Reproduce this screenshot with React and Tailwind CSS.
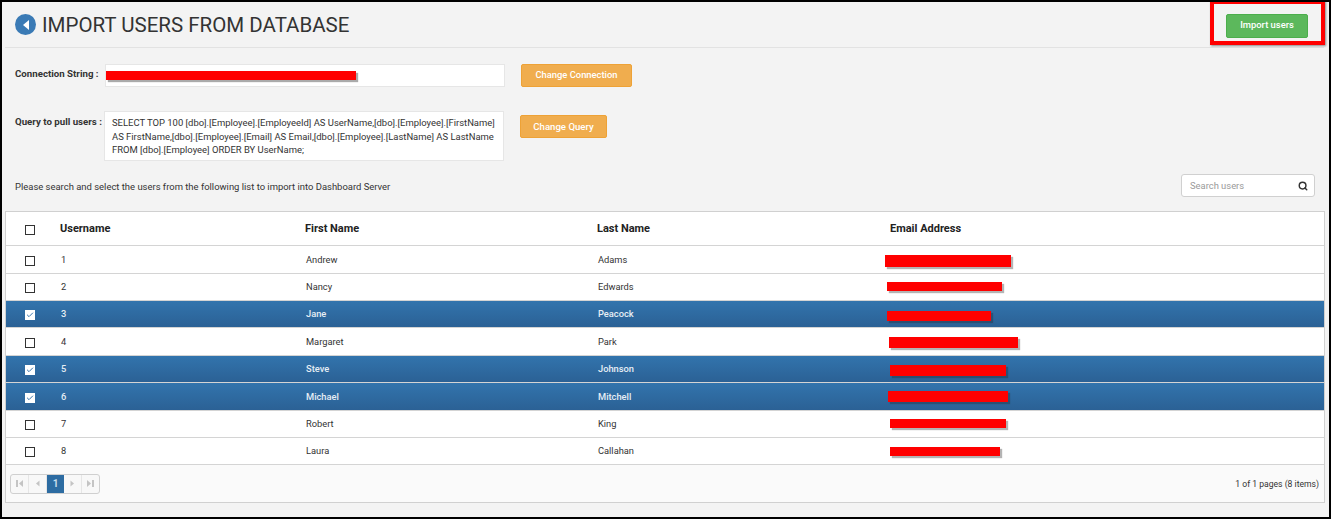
import { Check, Search } from "lucide-react";

const users = [
  { id: 1, first: "Andrew", last: "Adams", h: "h-[28px]", bar: "left-[-5px] top-[9px] w-[126px] h-[12px]" },
  { id: 2, first: "Nancy", last: "Edwards", h: "h-[27px]", bar: "left-[-3px] top-[8px] w-[115px] h-[9px]" },
  { id: 3, first: "Jane", last: "Peacock", h: "h-[27px]", selected: true, bar: "left-[-3px] top-[10px] w-[104px] h-[10px]" },
  { id: 4, first: "Margaret", last: "Park", h: "h-[28px]", bar: "left-[-1px] top-[9px] w-[129px] h-[11px]" },
  { id: 5, first: "Steve", last: "Johnson", h: "h-[27px]", selected: true, bar: "left-[0px] top-[9px] w-[116px] h-[11px]" },
  { id: 6, first: "Michael", last: "Mitchell", h: "h-[28px]", selected: true, bar: "left-[-2px] top-[8px] w-[120px] h-[11px]" },
  { id: 7, first: "Robert", last: "King", h: "h-[27px]", bar: "left-[0px] top-[8px] w-[116px] h-[9px]" },
  { id: 8, first: "Laura", last: "Callahan", h: "h-[27px]", bar: "left-[0px] top-[9px] w-[110px] h-[9px]" },
];

const cols = "grid grid-cols-[54px_245px_292px_293px_1fr] items-center";

function Box({ checked }) {
  if (checked) {
    return (
      <span className="flex h-[10px] w-[10px] items-center justify-center bg-white">
        <Check size={8} strokeWidth={3} className="text-[#3a76ad]" />
      </span>
    );
  }
  return <span className="block h-[10px] w-[10px] border border-[#333] bg-white" />;
}

// small solid arrows of the grid pager
function PagerIcon({ dir, bar }) {
  return (
    <svg width="7" height="7" viewBox="0 0 7 7" fill="#c4c4c4" className={dir === "right" ? "rotate-180" : ""}>
      {bar && <rect x="0" y="0" width="2" height="7" />}
      <path d={bar ? "M7 0 L3 3.5 L7 7 Z" : "M5.5 0.5 L2 3.5 L5.5 6.5 Z"} />
    </svg>
  );
}

function Pager() {
  const btn = "flex h-full w-[18px] items-center justify-center border-r border-[#e6e6e6]";
  return (
    <div className="flex h-[20px] overflow-hidden rounded-[3px] border border-[#d0d0d0] bg-[#f8f8f8]">
      <span className={btn}><PagerIcon bar /></span>
      <span className={btn}><PagerIcon /></span>
      <span className="flex h-full w-[17px] items-center justify-center bg-[#2d6ca2] text-[10px] font-bold text-[#c9dcec]">1</span>
      <span className={btn}><PagerIcon dir="right" /></span>
      <span className="flex h-full w-[17px] items-center justify-center"><PagerIcon dir="right" bar /></span>
    </div>
  );
}

export default function App() {
  return (
    <div className="h-[519px] w-[1331px] overflow-hidden border-2 border-black bg-[#f3f3f3] font-['Roboto',sans-serif] text-[#333]">
      <header className="ml-[3px] mr-[5px] flex h-[46px] items-center justify-between border-b border-[#e2e2e2]">
        <div className="flex items-center gap-[6px] pl-[10px]">
          <span className="flex h-[21px] w-[21px] items-center justify-center rounded-full bg-[#3a7ab5]">
            <svg width="8" height="10" viewBox="0 0 8 10"><path d="M7 0 L1 5 L7 10 Z" fill="#fff" /></svg>
          </span>
          <h1 className="pt-[1px] text-[20.5px] leading-none text-[#333]">IMPORT USERS FROM DATABASE</h1>
        </div>
        <div className="relative mr-[16px]">
          <button className="h-[24px] w-[82px] rounded-[2px] border border-[#4cae4c] bg-[#5cb85c] text-[9.4px] font-medium text-white">Import users</button>
          {/* annotation drawn over the screenshot */}
          <div className="absolute left-[-16px] top-[-11px] h-[45px] w-[115px] border-[4px] border-[#f00] shadow-[1px_1px_2px_#888]" />
        </div>
      </header>

      <div className="mt-[16px] flex h-[23px] items-center pl-[13px]">
        <label className="w-[90px] pb-[2px] text-[9.7px] font-bold">Connection String :</label>
        <div className="relative h-[23px] w-[400px] border border-[#e6e6e6] bg-white">
          <div className="absolute left-[0px] top-[6px] h-[9px] w-[250px] bg-[#f00] shadow-[2px_2px_1px_#aaa]" />
        </div>
        <button className="ml-[16px] h-[23px] w-[111px] rounded-[2px] border border-[#eea236] bg-[#f0ad4e] text-[9.4px] font-medium text-white">Change Connection</button>
      </div>

      <div className="mt-[24px] flex items-start pl-[13px]">
        <label className="w-[89px] pt-[4px] text-[9.7px] font-bold whitespace-nowrap">Query to pull users :</label>
        <div className="h-[50px] w-[400px] border border-[#e6e6e6] bg-white px-[7px] pt-[4px] text-[9.45px] leading-[13.5px]">
          SELECT TOP 100 [dbo].[Employee].[EmployeeId] AS UserName,[dbo].[Employee].[FirstName] AS FirstName,[dbo].[Employee].[Email] AS Email,[dbo].[Employee].[LastName] AS LastName FROM [dbo].[Employee] ORDER BY UserName;
        </div>
        <button className="ml-[16px] mt-[4px] h-[23px] w-[87px] rounded-[2px] border border-[#eea236] bg-[#f0ad4e] pt-[1px] text-[9.6px] font-medium text-white">Change Query</button>
      </div>

      <div className="mt-[13px] flex h-[23px] items-center justify-between pl-[13px] pr-[14px]">
        <p className="pt-[4px] text-[9.45px]">Please search and select the users from the following list to import into Dashboard Server</p>
        <div className="flex h-[23px] w-[134px] items-center justify-between rounded-[3px] border border-[#d0d0d0] bg-white pl-[8px] pr-[6px]">
          <span className="pt-[1px] text-[9.4px] text-[#999]">Search users</span>
          <Search size={10} strokeWidth={3.5} className="text-[#333]" />
        </div>
      </div>

      <section className="ml-[3px] mt-[14px] w-[1320px] border border-[#d0d0d0] bg-white">
        <div className={`${cols} h-[33px] text-[11px] font-bold text-[#222]`}>
          <span className="flex justify-center pr-[6px] pt-[3px]"><Box /></span>
          <span className="pt-[2px]">Username</span>
          <span className="pt-[2px]">First Name</span>
          <span className="pt-[2px]">Last Name</span>
          <span className="pt-[2px]">Email Address</span>
        </div>
        {users.map((u) => (
          <div
            key={u.id}
            className={`${cols} ${u.h} border-t border-[#d4d4d4] text-[9.3px] ${u.selected ? "bg-gradient-to-b from-[#3274ad] to-[#2b6195] font-medium text-[#e6eef5]" : "bg-white"}`}
          >
            <span className="flex justify-center pr-[6px] pt-[2px]"><Box checked={u.selected} /></span>
            <span className="pl-[1px]">{u.id}</span>
            <span className="pl-[1px]">{u.first}</span>
            <span className="pl-[1px]">{u.last}</span>
            <span className="relative h-full">
              <span className={`absolute ${u.bar} bg-[#f00] shadow-[2px_2px_1px_rgba(40,40,40,0.35)]`} />
            </span>
          </div>
        ))}
        <div className="flex h-[38px] items-center justify-between border-t border-[#d4d4d4] bg-[#fafafa] pl-[4px] pr-[5px]">
          <Pager />
          <span className="pt-[2px] text-[8.6px]">1 of 1 pages (8 items)</span>
        </div>
      </section>
    </div>
  );
}
